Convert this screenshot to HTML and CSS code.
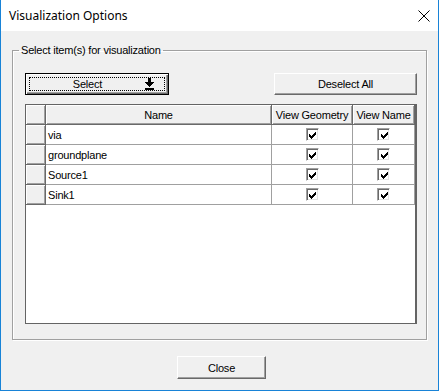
FILE: index.html
```html
<!DOCTYPE html>
<html lang="en">
<head>
    <meta charset="UTF-8">
    <title>Visualization Options</title>
    <link rel="stylesheet" href="styles.css">
</head>
<body>
    <svg class="defs" width="0" height="0">
        <symbol id="chk" viewBox="0 0 7 7">
            <path d="M6 0h1v1h-1zM5 1h2v1h-2zM0 2h1v1h-1zM4 2h3v1h-3zM0 3h2v1h-2zM3 3h3v1h-3zM0 4h5v1h-5zM1 5h3v1h-3zM2 6h1v1h-1z" fill="#000"/>
        </symbol>
    </svg>

    <div class="window">
        <div class="titlebar">
            <span class="title">Visualization Options</span>
            <svg class="close-x" width="12" height="12" viewBox="0 0 12 12">
                <path d="M0.5 0.5L11.5 11.5M11.5 0.5L0.5 11.5" stroke="#000" stroke-width="1"/>
            </svg>
        </div>

        <div class="client">
            <fieldset class="group">
                <legend>Select item(s) for visualization</legend>

                <div class="btn-row">
                    <div class="btn btn-default select-btn">
                        <div class="focus">
                            <span class="select-label">Select</span>
                            <svg class="arrow" width="9" height="12" viewBox="0 0 9 12">
                                <path d="M3 0h3v4h-3zM0 4h9v1h-9zM1 5h7v1h-7zM2 6h5v1h-5zM3 7h3v1h-3zM4 8h1v1h-1zM0 10h9v2h-9z" fill="#000"/>
                            </svg>
                        </div>
                    </div>
                    <div class="btn deselect-btn">Deselect All</div>
                </div>

                <div class="grid">
                    <div class="hcell"></div>
                    <div class="hcell">Name</div>
                    <div class="hcell">View Geometry</div>
                    <div class="hcell">View Name</div>

                    <div class="rhead"></div>
                    <div class="cell name">via</div>
                    <div class="cell"><span class="check"><svg width="7" height="7"><use href="#chk"/></svg></span></div>
                    <div class="cell"><span class="check"><svg width="7" height="7"><use href="#chk"/></svg></span></div>

                    <div class="rhead"></div>
                    <div class="cell name">groundplane</div>
                    <div class="cell"><span class="check"><svg width="7" height="7"><use href="#chk"/></svg></span></div>
                    <div class="cell"><span class="check"><svg width="7" height="7"><use href="#chk"/></svg></span></div>

                    <div class="rhead"></div>
                    <div class="cell name">Source1</div>
                    <div class="cell"><span class="check"><svg width="7" height="7"><use href="#chk"/></svg></span></div>
                    <div class="cell"><span class="check"><svg width="7" height="7"><use href="#chk"/></svg></span></div>

                    <div class="rhead"></div>
                    <div class="cell name">Sink1</div>
                    <div class="cell"><span class="check"><svg width="7" height="7"><use href="#chk"/></svg></span></div>
                    <div class="cell"><span class="check"><svg width="7" height="7"><use href="#chk"/></svg></span></div>
                </div>
            </fieldset>

            <div class="footer">
                <div class="btn close-btn">Close</div>
            </div>
        </div>
    </div>
</body>
</html>
```

FILE: styles.css
```css
body { margin: 0; font-family: "Liberation Sans", Arial, sans-serif; font-size: 11px; letter-spacing: -0.2px; color: #000; }
.defs { position: absolute; }

.window { width: 439px; height: 391px; box-sizing: border-box; border: 1px solid #1883d7; border-top: none; background: #f0f0f0; display: flex; flex-direction: column; }
.titlebar { height: 31px; background: #fff; display: flex; align-items: center; justify-content: space-between; padding: 0 8px 0 8px; }
.title { font-family: "Noto Sans", sans-serif; font-size: 12px; letter-spacing: 0; }
.close-x { margin-top: 1px; }

.client { padding: 12px 11px 0 11px; display: flex; flex-direction: column; }

.group { margin: 0; padding: 16px 9px 15px 12px; border: 1px solid #a0a0a0; box-shadow: inset 1px 1px 0 #fff, 1px 1px 0 #fff; }
.group legend { padding: 0 2px; margin-left: -6px; line-height: 14px; }

.btn-row { display: flex; justify-content: space-between; margin-bottom: 9px; }
.btn { box-sizing: border-box; height: 22px; display: flex; align-items: center; justify-content: center; background: #f0f0f0; border: 1px solid; border-color: #fff #696969 #696969 #fff; box-shadow: inset -1px -1px 0 #a0a0a0; }
.btn-default { border: 1px solid #000; box-shadow: inset 1px 1px 0 #fff, inset -1px -1px 0 #696969, inset -2px -2px 0 #a0a0a0; padding: 3px; }
.select-btn { width: 144px; }
.focus { flex: 1; align-self: stretch; border: 1px dotted #000; display: flex; align-items: center; }
.select-label { flex: 1; text-align: center; }
.arrow { margin-right: 10px; }
.deselect-btn { width: 143px; }

.grid { height: 220px; box-sizing: border-box; display: grid; grid-template-columns: 20px 226px 81px 1fr; grid-auto-rows: 20px; align-content: start; background: #fff; border: 1px solid #646464; border-right-width: 2px; }
.hcell { background: #f0f0f0; border-right: 1px solid #696969; border-bottom: 1px solid #696969; box-shadow: inset 1px 1px 0 #fff, inset -1px -1px 0 #a0a0a0; display: flex; align-items: center; justify-content: center; }
.rhead { background: #f0f0f0; border-right: 1px solid #696969; border-bottom: 1px solid #696969; box-shadow: inset 1px 1px 0 #fff, inset -1px -1px 0 #a0a0a0; }
.cell { border-right: 1px solid #a0a0a0; border-bottom: 1px solid #a0a0a0; display: flex; align-items: center; justify-content: center; }
.cell.name { justify-content: flex-start; padding-left: 2px; }
.check { box-sizing: border-box; width: 13px; height: 13px; background: #fff; border: 1px solid; border-color: #a0a0a0 #fff #fff #a0a0a0; box-shadow: inset 1px 1px 0 #696969, inset -1px -1px 0 #e3e3e3; display: flex; align-items: center; justify-content: center; }
.check svg { display: block; margin: 1px 0 0 1px; }

.footer { display: flex; justify-content: center; padding-top: 16px; padding-left: 4px; }
.close-btn { width: 89px; height: 23px; }
```
